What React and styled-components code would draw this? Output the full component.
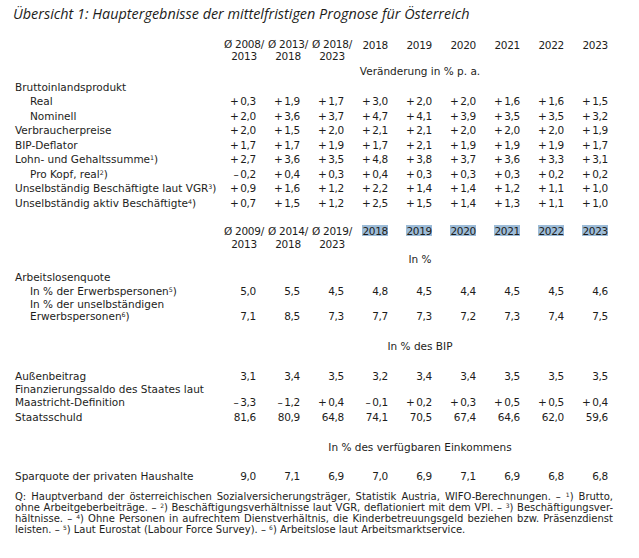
import React from 'react'
import styled, { createGlobalStyle } from 'styled-components'

const GlobalStyle = createGlobalStyle`
  body {
    margin: 0;
    background: #fff;
  }
`

const Page = styled.div`
  width: 639px;
  height: 558px;
  box-sizing: border-box;
  padding: 5px 26px 0 15px;
  font-family: "DejaVu Sans", "Open Sans", sans-serif;
  font-size: 10.5px;
  color: #1d1d1b;
  overflow: hidden;
`

const Title = styled.h1`
  margin: 0 0 0 -2px;
  font-family: "Open Sans", sans-serif;
  font-size: 14.4px;
  line-height: 18px;
  font-weight: normal;
  font-style: italic;
`

const Row = styled.div`
  display: grid;
  grid-template-columns: 197px repeat(9, 44px);
  align-items: end;
  line-height: ${p => p.$lh || 13}px;
  margin-top: ${p => p.$mt || 0}px;
`

const Label = styled.div`
  padding-left: ${p => (p.$indent ? 15 : 0)}px;
  white-space: nowrap;
`

const Num = styled.div`
  text-align: right;
  white-space: nowrap;
  letter-spacing: -0.3px;
`

const PeriodHead = styled.div`
  align-self: start;
  text-align: center;
  margin: 0 -10px 0 10px;
  white-space: nowrap;
  letter-spacing: -0.3px;
`

const YearHead = styled.div`
  align-self: start;
  text-align: right;
  letter-spacing: -0.3px;
`

const Mark = styled.span`
  display: inline-block;
  line-height: 10px;
  padding-top: 1px;
  background: ${p => (p.$on ? '#9dbcd8' : 'transparent')};
`

const Unit = styled.div`
  grid-column: 2 / -1;
  text-align: center;
  padding-left: 20px;
`

const Sup = styled.sup`
  font-size: 0.6em;
  vertical-align: 0.45em;
  line-height: 0;
`

const Notes = styled.div`
  margin-top: ${p => p.$mt}px;
  font-size: 10px;
  line-height: 11px;
`

const NoteLine = styled.div`
  text-align: justify;
  text-align-last: ${p => (p.$last ? 'left' : 'justify')};
  white-space: nowrap;
`

const fmt = v => (v[0] === '+' || v[0] === '–' ? v[0] + '\u2009' + v.slice(1) : v)

const Cells = ({ values }) =>
  values.split(' ').map((v, i) => <Num key={i}>{fmt(v)}</Num>)

const Header = ({ periods, marked, lh, mt }) => (
  <Row $lh={lh} $mt={mt}>
    <div />
    {periods.map(p => (
      <PeriodHead key={p[0]}>
        Ø {p[0]}/<br />
        {p[1]}
      </PeriodHead>
    ))}
    {['2018', '2019', '2020', '2021', '2022', '2023'].map(y => (
      <YearHead key={y}>
        <Mark $on={marked}>{y}</Mark>
      </YearHead>
    ))}
  </Row>
)

const UnitRow = ({ mt, children }) => (
  <Row $mt={mt}>
    <div />
    <Unit>{children}</Unit>
  </Row>
)

const Line = ({ label, values, indent, lh, mt }) => (
  <Row $lh={lh} $mt={mt}>
    <Label $indent={indent}>{label}</Label>
    {values && <Cells values={values} />}
  </Row>
)

const growth = [
  ['Real', '+0,3 +1,9 +1,7 +3,0 +2,0 +2,0 +1,6 +1,6 +1,5', true],
  ['Nominell', '+2,0 +3,6 +3,7 +4,7 +4,1 +3,9 +3,5 +3,5 +3,2', true],
  ['Verbraucherpreise', '+2,0 +1,5 +2,0 +2,1 +2,1 +2,0 +2,0 +2,0 +1,9'],
  ['BIP-Deflator', '+1,7 +1,7 +1,9 +1,7 +2,1 +1,9 +1,9 +1,9 +1,7'],
  [<>Lohn- und Gehaltssumme<Sup>1</Sup>)</>, '+2,7 +3,6 +3,5 +4,8 +3,8 +3,7 +3,6 +3,3 +3,1'],
  [<>Pro Kopf, real<Sup>2</Sup>)</>, '–0,2 +0,4 +0,3 +0,4 +0,3 +0,3 +0,3 +0,2 +0,2', true],
  [<>Unselbständig Beschäftigte laut VGR<Sup>3</Sup>)</>, '+0,9 +1,6 +1,2 +2,2 +1,4 +1,4 +1,2 +1,1 +1,0'],
  [<>Unselbständig aktiv Beschäftigte<Sup>4</Sup>)</>, '+0,7 +1,5 +1,2 +2,5 +1,5 +1,4 +1,3 +1,1 +1,0'],
]

export default function App() {
  return (
    <Page>
      <GlobalStyle />
      <Title>Übersicht 1: Hauptergebnisse der mittelfristigen Prognose für Österreich</Title>

      <Header periods={[['2008', '2013'], ['2013', '2018'], ['2018', '2023']]} lh={11.5} mt={16} />
      <UnitRow mt={3}>Veränderung in % p. a.</UnitRow>
      <Line label="Bruttoinlandsprodukt" mt={3} />
      {growth.map(([label, values, indent], i) => (
        <Line key={i} label={label} values={values} indent={indent} lh={14.57} />
      ))}

      <Header periods={[['2009', '2013'], ['2014', '2018'], ['2019', '2023']]} marked mt={14} />
      <UnitRow mt={2}>In %</UnitRow>
      <Line label="Arbeitslosenquote" mt={5} />
      <Line label={<>In % der Erwerbspersonen<Sup>5</Sup>)</>} values="5,0 5,5 4,5 4,8 4,5 4,4 4,5 4,5 4,6" indent mt={1} />
      <Line
        label={<>In % der unselbständigen<br />Erwerbspersonen<Sup>6</Sup>)</>}
        values="7,1 8,5 7,3 7,7 7,3 7,2 7,3 7,4 7,5"
        indent
        lh={12}
        mt={0}
      />

      <UnitRow mt={18}>In % des BIP</UnitRow>
      <Line label="Außenbeitrag" values="3,1 3,4 3,5 3,2 3,4 3,4 3,5 3,5 3,5" mt={17} />
      <Line
        label={<>Finanzierungssaldo des Staates laut<br />Maastricht-Definition</>}
        values="–3,3 –1,2 +0,4 –0,1 +0,2 +0,3 +0,5 +0,5 +0,4"
      />
      <Line label="Staatsschuld" values="81,6 80,9 64,8 74,1 70,5 67,4 64,6 62,0 59,6" mt={2} />

      <UnitRow mt={17}>In % des verfügbaren Einkommens</UnitRow>
      <Line label="Sparquote der privaten Haushalte" values="9,0 7,1 6,9 7,0 6,9 7,1 6,9 6,8 6,8" mt={16} />

      <Notes $mt={8}>
        <NoteLine>
          Q: Hauptverband der österreichischen Sozialversicherungsträger, Statistik Austria, WIFO-Berechnungen. – <Sup>1</Sup>) Brutto,
        </NoteLine>
        <NoteLine>
          ohne Arbeitgeberbeiträge. – <Sup>2</Sup>) Beschäftigungsverhältnisse laut VGR, deflationiert mit dem VPI. – <Sup>3</Sup>) Beschäftigungsver-
        </NoteLine>
        <NoteLine>
          hältnisse. – <Sup>4</Sup>) Ohne Personen in aufrechtem Dienstverhältnis, die Kinderbetreuungsgeld beziehen bzw. Präsenzdienst
        </NoteLine>
        <NoteLine $last>
          leisten. – <Sup>5</Sup>) Laut Eurostat (Labour Force Survey). – <Sup>6</Sup>) Arbeitslose laut Arbeitsmarktservice.
        </NoteLine>
      </Notes>
    </Page>
  )
}
